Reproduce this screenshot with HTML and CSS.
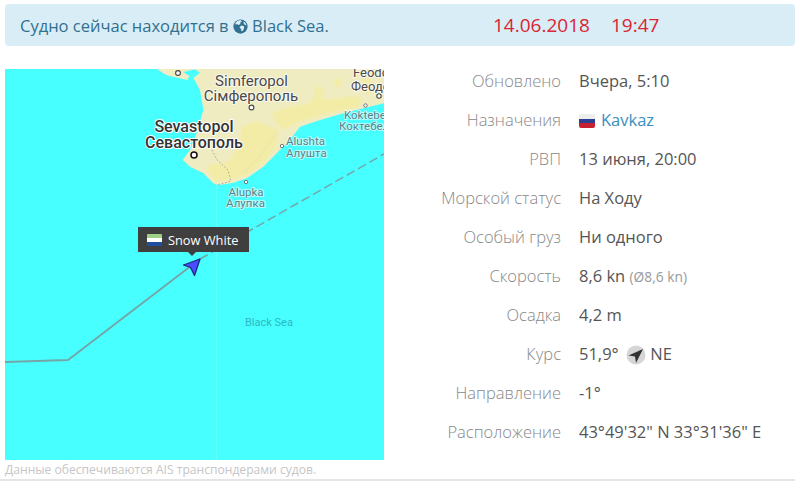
FILE: index.html
```html
<!DOCTYPE html>
<html lang="ru">
<head>
<meta charset="utf-8">
<title>Snow White</title>
<link rel="stylesheet" href="styles.css">
</head>
<body>
<header class="banner">
  <div class="banner-text">Судно сейчас находится в
    <svg class="globe" viewBox="0 0 16 16" aria-hidden="true"><circle cx="8" cy="8" r="7.6" fill="#31708f"/><path d="M5 1.6 L8.4 1.2 L9.4 2.8 L7.6 3.8 L8 5.4 L6 6.4 L4.4 5.4 L3 6.2 L2.4 4.6 Z M8.6 7 L11.4 7.4 L12 9.2 L10.6 12.4 L9 13 L8.6 10.6 L7 9 Z M11 2.6 L13.2 4 L14.4 6.8 L12.4 6 L11.4 4.6 Z" fill="#d9edf7"/></svg>
    Black Sea.</div>
  <div class="banner-date"><span>14.06.2018</span><span>19:47</span></div>
</header>
<main class="content">
  <section class="map-col">
    <svg class="map" viewBox="5 69 379 391" aria-label="Карта">
      <defs><filter id="soft"><feGaussianBlur stdDeviation="2.500"/></filter></defs>
      <rect x="5" y="69" width="379" height="391" fill="#47ffff"/>
      <g transform="translate(150 68) scale(.33333)">
        <path fill="#f0ecc2" d="M20 3 L50 22 L85 30 L112 36 L118 24 L100 12 L135 4 L150 14 L130 30 L150 66 L160 126 L140 196 L120 246 L98 276 L120 296 L160 316 L190 346 L205 351 L250 344 L290 331 L340 296 L380 256 L420 216 L450 176 L510 156 L580 136 L640 121 L702 106 L702 0 L20 0 Z"/>
        <g filter="url(#soft)">
          <path fill="#f3eca6" d="M275 175 L320 160 L360 175 L385 185 L375 240 L340 285 L295 320 L240 335 L195 338 L170 305 L180 290 L230 285 L270 235 Z"/>
          <path fill="#f3eca6" d="M365 135 L420 115 L470 110 L500 80 L530 95 L600 85 L640 90 L620 118 L540 135 L450 160 L400 185 L380 165 Z"/>
          <path fill="#f3eca6" d="M490 55 L525 62 L515 85 L495 80 Z M555 28 L575 35 L570 60 L552 52 Z M640 30 L670 40 L660 80 L635 70 Z"/>
          <path fill="none" stroke="#e4dfb0" stroke-width="3" d="M380 195 L330 265 L280 315"/>
        </g>
      </g>
      <path class="border" d="M212 150 L217 160 L228 170 L231 181 L217 185"/>
      <path class="grid" d="M216.5 185 V460"/>
      <path class="track" d="M5 362 L68 360 L200 259"/>
      <path class="track dashed" d="M200 259 L384 154"/>
      <g class="dots">
        <circle cx="178" cy="73" r="2.4"/>
        <circle cx="251.500" cy="107.500" r="2.400"/>
        <circle class="major" cx="194" cy="155" r="3"/>
        <circle class="minor" cx="282" cy="146" r="1.700"/>
        <circle class="minor" cx="246" cy="182" r="1.700"/>
        <circle class="minor" cx="365.500" cy="105.500" r="1.700"/>
        <circle cx="379" cy="96" r="2.200"/>
      </g>
      <text class="city mid" x="251.500" y="86">Simferopol</text>
      <text class="city mid" x="251" y="101">Сімферополь</text>
      <text class="city mid bold" x="194" y="132">Sevastopol</text>
      <text class="city mid bold" x="194" y="148">Севастополь</text>
      <text class="town" x="286" y="145">Alushta</text>
      <text class="town" x="286" y="157">Алушта</text>
      <text class="town mid" x="246" y="196">Alupka</text>
      <text class="town mid" x="245.500" y="207">Алупка</text>
      <text class="town" x="344" y="119">Koktebel</text>
      <text class="town" x="339" y="130">Коктебель</text>
      <text class="city small" x="353" y="77">Feodosia</text>
      <text class="city small" x="351" y="91">Феодосия</text>
      <text class="sea" x="245" y="326">Black Sea</text>
      <path class="ship" d="M200 259 L183.500 265 L190.500 267.500 L194.500 275.500 Z"/>
    </svg>
    <div class="ship-tip">
      <span class="flag-sl"></span>Snow White
    </div>
    <p class="note">Данные обеспечиваются AIS транспондерами судов.</p>
  </section>
  <dl class="facts">
    <dt>Обновлено</dt><dd>Вчера, 5:10</dd>
    <dt>Назначения</dt><dd><span class="flag-ru"></span><a href="#">Kavkaz</a></dd>
    <dt>РВП</dt><dd>13 июня, 20:00</dd>
    <dt>Морской статус</dt><dd>На Ходу</dd>
    <dt>Особый груз</dt><dd>Ни одного</dd>
    <dt>Скорость</dt><dd>8,6 kn <small>(Ø8,6 kn)</small></dd>
    <dt>Осадка</dt><dd>4,2 m</dd>
    <dt>Курс</dt><dd class="course">51,9°
      <svg class="compass" viewBox="0 0 20 20" aria-hidden="true"><circle cx="10" cy="10" r="9.500" fill="#d6d6d6"/><path d="M17 4 L2.500 10.500 L9 11.500 L10 18 Z" fill="#333"/></svg>
      NE</dd>
    <dt>Направление</dt><dd>-1°</dd>
    <dt>Расположение</dt><dd>43°49'32" N 33°31'36" E</dd>
  </dl>
</main>
</body>
</html>
```
FILE: styles.css
```css
html, body {
  margin: 0;
  height: 481px;
  overflow: hidden;
  background: #fff;
}

body {
  font-family: "Open Sans", "Noto Sans", sans-serif;
  font-size: 16.500px;
  color: #555;
  box-sizing: border-box;
  border-bottom: 2px solid #e5e5e5;
}

.banner {
  display: grid;
  grid-template-columns: 473px 1fr;
  align-items: center;
  height: 42px;
  margin: 4px 0 0 5px;
  padding-left: 15px;
  background: #d9edf7;
  border-radius: 4px;
  color: #31708f;
}

.banner-text {
  white-space: nowrap;
}

.globe {
  width: 15px;
  height: 15px;
  vertical-align: -2px;
}

.banner-date {
  display: flex;
  gap: 21px;
  font-size: 19px;
  color: #dc2433;
}

.content {
  display: flex;
  margin-top: 15px;
}

.map-col {
  position: relative;
  flex: 0 0 379px;
  margin: 8px 0 0 5px;
}

.map {
  display: block;
  width: 379px;
  height: 391px;
}

.border {
  fill: none;
  stroke: #a8a49a;
  stroke-width: 1;
  stroke-dasharray: 1.5 2;
}

.grid {
  fill: none;
  stroke: #62ffff;
  stroke-width: 1;
}

.track {
  fill: none;
  stroke: #74a6a8;
  stroke-width: 1.800;
}

.dashed {
  stroke-dasharray: 9 4;
  stroke-width: 1.500;
}

.dots circle {
  fill: #fff;
  stroke: #444;
  stroke-width: 1.100;
}

.dots .major {
  stroke: #111;
  stroke-width: 1.500;
}

.dots .minor {
  stroke: #666;
  stroke-width: 0.900;
}

.map text {
  font-family: Roboto, "Liberation Sans", sans-serif;
  paint-order: stroke;
  stroke-linejoin: round;
}

.map .city {
  font-size: 15px;
  fill: #4a4a4a;
  stroke: rgba(255, 255, 255, .7);
  stroke-width: 2px;
}

.map .small {
  font-size: 13px;
}

.map .bold {
  font-size: 16px;
  font-weight: 500;
  fill: #333;
  stroke: #fff;
}

.map .town {
  font-size: 11.500px;
  fill: #5d7f86;
  stroke: rgba(255, 255, 255, .6);
  stroke-width: 2px;
}

.map .mid {
  text-anchor: middle;
}

.map .sea {
  font-size: 11px;
  fill: #2ab8c0;
}

.ship {
  fill: #4b4bff;
  stroke: #1b2a7c;
  stroke-width: 1.300;
  stroke-linejoin: round;
}

.ship-tip {
  position: absolute;
  left: 133px;
  top: 158px;
  display: flex;
  align-items: center;
  gap: 6px;
  width: 102px;
  height: 25px;
  padding-left: 9px;
  background: #3f3f3f;
  color: #fff;
  font-size: 12.800px;
  font-weight: 500;
  white-space: nowrap;
}

.ship-tip::after {
  content: "";
  position: absolute;
  left: 50px;
  top: 25px;
  border: 4px solid transparent;
  border-top-color: #3f3f3f;
  border-bottom-width: 0;
}

.flag-sl {
  width: 15px;
  height: 12px;
  border-radius: 1px;
  background: linear-gradient(#9fd088 0 33%, #fff 33% 66%, #1f4f9e 66%);
}

.note {
  margin: 2px 0 0;
  font-size: 12.100px;
  line-height: 15px;
  color: #c6c6c6;
  white-space: nowrap;
}

.facts {
  display: grid;
  grid-template-columns: 177px auto;
  grid-auto-rows: 39px;
  column-gap: 18px;
  align-items: center;
  justify-content: start;
  margin: 0;
}

.facts dt {
  text-align: right;
  font-weight: 300;
  color: #888;
  white-space: nowrap;
}

.facts dd {
  margin: 0;
  white-space: nowrap;
}

.facts a {
  color: #3a8fc0;
  text-decoration: none;
}

.facts small {
  font-size: 13.800px;
  color: #999;
}

.flag-ru {
  display: inline-block;
  width: 16px;
  height: 14px;
  margin-right: 6px;
  vertical-align: -2px;
  border-radius: 2px;
  background: linear-gradient(#eee 0 33%, #2c3f92 33% 66%, #c8202f 66%);
}

.compass {
  width: 20px;
  height: 20px;
  margin: 0 0 0 3px;
  vertical-align: -5px;
}
```
